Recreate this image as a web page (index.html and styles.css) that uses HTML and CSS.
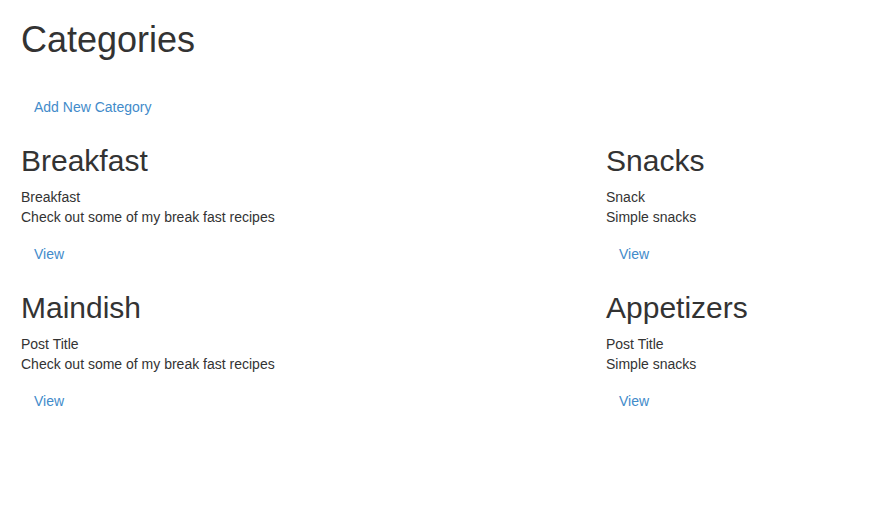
FILE: index.html
```html
<!DOCTYPE html>
<html>
<head>
<meta charset="utf-8">
<title>Categories</title>
<link rel="stylesheet" href="styles.css">
</head>
<body>
<div class="page">
  <h1 class="title">Categories</h1>
  <p class="actions"><a class="btn-link" href="#">Add New Category</a></p>
  <div class="grid">
    <div class="card">
      <h2>Breakfast</h2>
      <p class="desc">Breakfast<br>Check out some of my break fast recipes</p>
      <a class="btn-link" href="#">View</a>
    </div>
    <div class="card">
      <h2>Snacks</h2>
      <p class="desc">Snack<br>Simple snacks</p>
      <a class="btn-link" href="#">View</a>
    </div>
    <div class="card">
      <h2>Maindish</h2>
      <p class="desc">Post Title<br>Check out some of my break fast recipes</p>
      <a class="btn-link" href="#">View</a>
    </div>
    <div class="card">
      <h2>Appetizers</h2>
      <p class="desc">Post Title<br>Simple snacks</p>
      <a class="btn-link" href="#">View</a>
    </div>
  </div>
</div>
</body>
</html>
```
FILE: styles.css
```css
html, body {
  margin: 0;
  padding: 0;
  background: #fff;
}
body {
  font-family: "Liberation Sans", Arial, Helvetica, sans-serif;
  font-size: 14px;
  line-height: 20px;
  color: #333;
}
.page {
  padding: 0 21px;
}
.title {
  font-size: 36px;
  font-weight: 500;
  line-height: 1.1;
  margin: 20px 0 10px;
}
.actions {
  margin: 30px 0 0;
}
.btn-link {
  display: inline-block;
  padding: 7px 13px;
  line-height: 20px;
  color: #428bca;
  text-decoration: none;
}
.grid {
  display: grid;
  grid-template-columns: 585px 1fr;
  column-gap: 0;
}
.card h2 {
  font-size: 30px;
  font-weight: 500;
  line-height: 1.1;
  margin: 20px 0 10px;
}
.desc {
  margin: 0 0 10px;
}
```
